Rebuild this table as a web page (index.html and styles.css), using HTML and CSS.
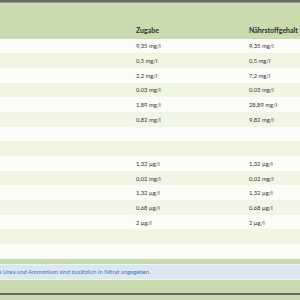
FILE: index.html
```html
<!DOCTYPE html>
<html lang="de">
<head>
<meta charset="utf-8">
<link rel="stylesheet" href="styles.css">
</head>
<body>
<div class="topbar"></div>
<div class="table">
  <div class="row head"><span></span><span>Zugabe</span><span>Nährstoffgehalt (Summe)</span></div>
  <div class="row"><span></span><span>9,35 mg/l</span><span>9,35 mg/l</span></div>
  <div class="row"><span></span><span>0,5 mg/l</span><span>0,5 mg/l</span></div>
  <div class="row"><span></span><span>2,2 mg/l</span><span>7,2 mg/l</span></div>
  <div class="row"><span></span><span>0,03 mg/l</span><span>0,03 mg/l</span></div>
  <div class="row"><span></span><span>1,89 mg/l</span><span>28,89 mg/l</span></div>
  <div class="row"><span></span><span>0,82 mg/l</span><span>9,82 mg/l</span></div>
  <div class="row"><span></span><span></span><span></span></div>
  <div class="row"><span></span><span></span><span></span></div>
  <div class="row"><span></span><span>1,32 µg/l</span><span>1,32 µg/l</span></div>
  <div class="row"><span></span><span>0,02 mg/l</span><span>0,02 mg/l</span></div>
  <div class="row"><span></span><span>1,32 µg/l</span><span>1,32 µg/l</span></div>
  <div class="row"><span></span><span>0,68 µg/l</span><span>0,68 µg/l</span></div>
  <div class="row"><span></span><span>2 µg/l</span><span>2 µg/l</span></div>
  <div class="row"><span></span><span></span><span></span></div>
  <div class="row"><span></span><span></span><span></span></div>
</div>
<div class="footer">
  <div class="info">s Urea und Ammonium sind zusätzlich in Nitrat angegeben.</div>
</div>
<div class="bottombar"></div>
</body>
</html>
```

FILE: styles.css
```css
html, body {
  margin: 0;
  padding: 0;
  width: 300px;
  height: 300px;
  overflow: hidden;
  background: #c8dcb0;
  font-family: Lato, "Open Sans", sans-serif;
}
.topbar {
  height: 2px;
  background: #676767;
  border-bottom: 1px solid #9a9a9a;
}
.table {
  display: flex;
  flex-direction: column;
}
.row {
  display: grid;
  grid-template-columns: 136px 113px 1fr;
  height: 14.7px;
  align-items: center;
  font-size: 5.8px;
  color: #333;
  white-space: nowrap;
  overflow: hidden;
}
.row:nth-child(even) { background: #fbfcf7; }
.row:nth-child(odd) { background: #f1f5e4; }
.row.head {
  height: 35.5px;
  background: #c8dcb0;
  align-items: end;
  font-weight: bold;
  font-size: 7px;
  color: #2e2e2e;
  padding-bottom: 5px;
  box-sizing: border-box;
}
.footer {
  padding: 5px 0 0;
  height: 34px;
  box-sizing: border-box;
}
.info {
  height: 16px;
  box-sizing: border-box;
  background: #dce7f2;
  border-top: 1px solid #eef3f8;
  border-bottom: 1px solid #eef3f8;
  color: #3f72b3;
  font-size: 5.9px;
  line-height: 14px;
  white-space: nowrap;
  text-indent: -1px;
}
.bottombar {
  height: 2px;
  background: #676767;
}
```
